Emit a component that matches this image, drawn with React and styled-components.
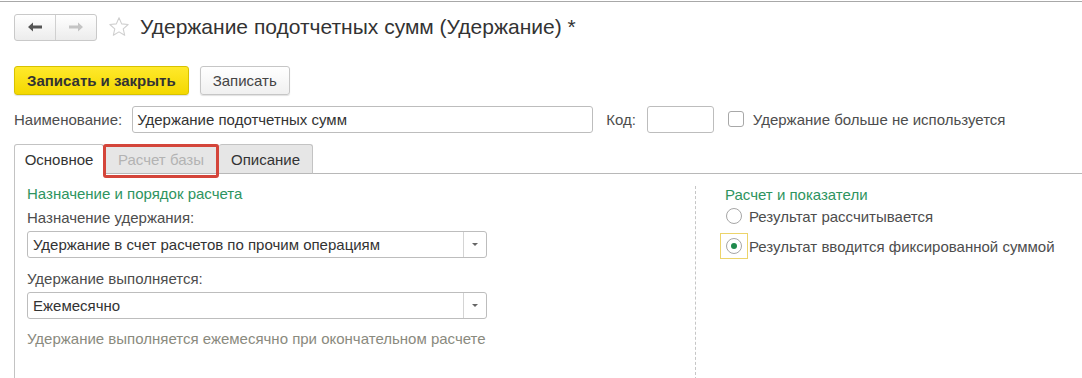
import React, { useState } from 'react';
import styled, { createGlobalStyle } from 'styled-components';

const GlobalStyle = createGlobalStyle`
  body {
    margin: 0;
    background: #fff;
    font-family: "Liberation Sans", Arial, sans-serif;
    font-size: 15px;
    color: #4d4d4d;
  }
`;

const Page = styled.div`
  width: 1082px;
  height: 378px;
  overflow: hidden;
  border-top: 1px solid #a8a8a8;
  margin-top: 1px;
  box-sizing: border-box;
`;

const Header = styled.div`
  display: flex;
  align-items: center;
  padding: 11px 14px 0;
  height: 28px;
`;

const NavGroup = styled.div`
  display: flex;
  height: 27px;
  border: 1px solid #c9c9c9;
  border-radius: 3px;
  background: linear-gradient(#ffffff, #ececec);
  box-sizing: border-box;
`;

const NavButton = styled.div`
  width: 40px;
  display: flex;
  align-items: center;
  justify-content: center;
  color: ${({ disabled }) => (disabled ? '#c4c4c4' : '#555')};
  & + & {
    border-left: 1px solid #d0d0d0;
  }
`;

const Star = styled.div`
  margin-left: 11px;
  width: 24px;
  height: 24px;
  display: flex;
  align-items: center;
`;

const Title = styled.h1`
  margin: 0 0 0 8px;
  font-size: 21px;
  font-weight: normal;
  color: #333;
  white-space: nowrap;
`;

const Toolbar = styled.div`
  display: flex;
  gap: 11px;
  padding: 25px 14px 0;
`;

const Button = styled.button`
  height: 29px;
  padding: 0 12px;
  border-radius: 3px;
  font-family: inherit;
  font-size: 15px;
  font-weight: ${({ primary }) => (primary ? 'bold' : 'normal')};
  color: ${({ primary }) => (primary ? '#333' : '#444')};
  border: 1px solid ${({ primary }) => (primary ? '#d7c200' : '#c6c6c6')};
  background: ${({ primary }) =>
    primary ? 'linear-gradient(#ffe92b, #f4d800)' : 'linear-gradient(#ffffff, #f0f0f0)'};
  box-shadow: 0 1px 1px rgba(0, 0, 0, 0.12);
`;

const FieldRow = styled.div`
  display: flex;
  align-items: center;
  padding: 10px 14px 0;
  height: 28px;
`;

const Label = styled.span`
  white-space: nowrap;
  color: #4d4d4d;
  margin-right: ${({ gap }) => gap || 0}px;
`;

const Input = styled.div`
  width: ${({ w }) => w}px;
  height: 27px;
  box-sizing: border-box;
  border: 1px solid #bdbdbd;
  border-radius: 3px;
  padding: 0 4px;
  display: flex;
  align-items: center;
  color: #333;
  background: #fff;
  margin-right: ${({ mr }) => mr || 0}px;
  white-space: nowrap;
`;

const Checkbox = styled.span`
  width: 16px;
  height: 16px;
  box-sizing: border-box;
  border: 1px solid #a8a8a8;
  border-radius: 3px;
  margin-right: 9px;
`;

const TabBar = styled.div`
  display: flex;
  padding: 11px 0 0 14px;
  height: 41px;
  box-sizing: border-box;
`;

const Tab = styled.div`
  position: relative;
  width: ${({ w }) => w}px;
  height: 30px;
  box-sizing: border-box;
  display: flex;
  align-items: center;
  justify-content: center;
  border: 1px solid #c3c3c3;
  border-bottom: ${({ active }) => (active ? 'none' : '1px solid #b8b8b8')};
  border-left: ${({ first }) => (first ? '1px solid #c3c3c3' : 'none')};
  border-radius: 3px 3px 0 0;
  background: ${({ active }) => (active ? '#fff' : '#e6e6e6')};
  color: ${({ muted }) => (muted ? '#b3b3b3' : '#333')};
  white-space: nowrap;
`;

const Highlight = styled.div`
  position: absolute;
  left: -1px;
  top: -1px;
  right: -1px;
  bottom: -5px;
  border: 3px solid #d4453a;
  border-radius: 3px;
  pointer-events: none;
`;

const TabLine = styled.div`
  flex: 1;
  align-self: flex-end;
  height: 30px;
  box-sizing: border-box;
  border-bottom: 1px solid #b8b8b8;
`;

const Body = styled.div`
  display: flex;
  margin-left: 14px;
  border-left: 1px solid #c3c3c3;
  height: 206px;
`;

const LeftColumn = styled.div`
  width: 680px;
  padding: 11px 0 0 12px;
  box-sizing: border-box;
`;

const RightColumn = styled.div`
  flex: 1;
  margin-top: 12px;
  border-left: 1px dashed #c6c6c6;
  padding: 0 0 0 29px;
`;

const GroupTitle = styled.div`
  color: #2e9460;
  line-height: 17px;
`;

const FieldLabel = styled.div`
  margin-top: ${({ mt }) => mt}px;
  line-height: 17px;
  color: #4d4d4d;
`;

const Select = styled.div`
  margin-top: 5px;
  width: 460px;
  height: 27px;
  box-sizing: border-box;
  border: 1px solid #bdbdbd;
  border-radius: 3px;
  display: flex;
  align-items: stretch;
  color: #333;
`;

const SelectValue = styled.div`
  flex: 1;
  display: flex;
  align-items: center;
  padding-left: 5px;
  white-space: nowrap;
`;

const SelectArrow = styled.div`
  width: 22px;
  border-left: 1px solid #d4d4d4;
  display: flex;
  align-items: center;
  justify-content: center;
  &::after {
    content: '';
    border-left: 3px solid transparent;
    border-right: 3px solid transparent;
    border-top: 3px solid #666;
  }
`;

const Hint = styled.div`
  margin-top: 11px;
  color: #8a8a7e;
  line-height: 17px;
`;

const RadioRow = styled.div`
  display: flex;
  align-items: center;
  margin-top: ${({ mt }) => mt}px;
  margin-left: -5px;
  height: 26px;
`;

const RadioBox = styled.div`
  width: 28px;
  height: 26px;
  box-sizing: border-box;
  display: flex;
  align-items: center;
  justify-content: center;
  border: 1px solid ${({ focused }) => (focused ? '#ecd46a' : 'transparent')};
  margin-right: 1px;
`;

const Radio = styled.span`
  width: 16px;
  height: 16px;
  box-sizing: border-box;
  border-radius: 50%;
  border: 1px solid #a6a6a6;
  background: #fff;
  display: flex;
  align-items: center;
  justify-content: center;
  &::after {
    content: '';
    display: ${({ checked }) => (checked ? 'block' : 'none')};
    width: 6px;
    height: 6px;
    border-radius: 50%;
    background: #1f8a4c;
  }
`;

const RadioLabel = styled.span`
  color: #4d4d4d;
  white-space: nowrap;
`;

const ArrowIcon = ({ dir }) => (
  <svg width="14" height="10" viewBox="0 0 14 10">
    <path
      d={dir === 'left' ? 'M0 5 L5 0.5 L5 3.5 L14 3.5 L14 6.5 L5 6.5 L5 9.5 Z' : 'M14 5 L9 0.5 L9 3.5 L0 3.5 L0 6.5 L9 6.5 L9 9.5 Z'}
      fill="currentColor"
    />
  </svg>
);

const StarIcon = () => (
  <svg width="22" height="22" viewBox="0 0 24 24">
    <path
      d="M12 2 L14.9 8.6 L22 9.3 L16.6 14 L18.2 21 L12 17.3 L5.8 21 L7.4 14 L2 9.3 L9.1 8.6 Z"
      fill="none"
      stroke="#cfcfcf"
      strokeWidth="1.2"
      strokeLinejoin="round"
    />
  </svg>
);

const App = () => {
  const [fixed, setFixed] = useState(true);

  return (
    <Page>
      <GlobalStyle />
      <Header>
        <NavGroup>
          <NavButton><ArrowIcon dir="left" /></NavButton>
          <NavButton disabled><ArrowIcon dir="right" /></NavButton>
        </NavGroup>
        <Star><StarIcon /></Star>
        <Title>Удержание подотчетных сумм (Удержание) *</Title>
      </Header>

      <Toolbar>
        <Button primary>Записать и закрыть</Button>
        <Button>Записать</Button>
      </Toolbar>

      <FieldRow>
        <Label gap={10}>Наименование:</Label>
        <Input w={461} mr={13}>Удержание подотчетных сумм</Input>
        <Label gap={11}>Код:</Label>
        <Input w={67} mr={14} />
        <Checkbox />
        <Label>Удержание больше не используется</Label>
      </FieldRow>

      <TabBar>
        <Tab active first w={90}>Основное</Tab>
        <Tab muted w={115}>
          Расчет базы
          <Highlight />
        </Tab>
        <Tab w={94}>Описание</Tab>
        <TabLine />
      </TabBar>

      <Body>
        <LeftColumn>
          <GroupTitle>Назначение и порядок расчета</GroupTitle>
          <FieldLabel mt={7}>Назначение удержания:</FieldLabel>
          <Select>
            <SelectValue>Удержание в счет расчетов по прочим операциям</SelectValue>
            <SelectArrow />
          </Select>
          <FieldLabel mt={12}>Удержание выполняется:</FieldLabel>
          <Select>
            <SelectValue>Ежемесячно</SelectValue>
            <SelectArrow />
          </Select>
          <Hint>Удержание выполняется ежемесячно при окончательном расчете</Hint>
        </LeftColumn>

        <RightColumn>
          <GroupTitle>Расчет и показатели</GroupTitle>
          <RadioRow mt={0} onClick={() => setFixed(false)}>
            <RadioBox><Radio checked={!fixed} /></RadioBox>
            <RadioLabel>Результат рассчитывается</RadioLabel>
          </RadioRow>
          <RadioRow mt={4} onClick={() => setFixed(true)}>
            <RadioBox focused><Radio checked={fixed} /></RadioBox>
            <RadioLabel>Результат вводится фиксированной суммой</RadioLabel>
          </RadioRow>
        </RightColumn>
      </Body>
    </Page>
  );
};

export default App;
